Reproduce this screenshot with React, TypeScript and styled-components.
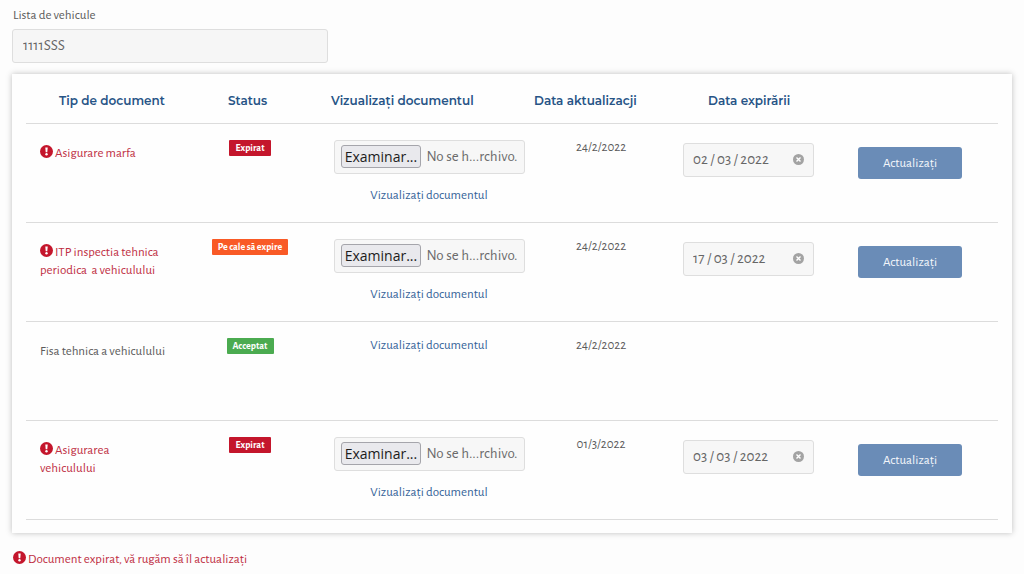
import React from "react";
import styled, { createGlobalStyle } from "styled-components";

const Global = createGlobalStyle`
  * { box-sizing: border-box; }
  body {
    margin: 0;
    background: #fdfdfd;
    color: #5b5b5b;
    font-family: "Alegreya Sans", Lato, "Liberation Sans", sans-serif;
    font-size: 13px;
    line-height: 18px;
  }
  button, input, select { font-family: inherit; }
`;

const Page = styled.main`
  padding: 7px 12px 0;
`;

const FieldLabel = styled.label`
  display: block;
  margin: 0 1px 4px;
`;

const VehicleSelect = styled.select`
  display: block;
  appearance: none;
  width: 100%;
  max-width: 316px;
  height: 34px;
  padding: 0 10px 2px;
  border: 1px solid #dedede;
  border-radius: 3px;
  background: #f6f6f6;
  color: #666;
  font-size: 15px;
`;

const Card = styled.section`
  margin-top: 11px;
  padding: 0 14px 13px;
  background: #fefefe;
  box-shadow: 0 0 6px rgba(0, 0, 0, 0.25);
`;

const Table = styled.table`
  width: 100%;
  table-layout: fixed;
  border-collapse: collapse;
`;

const Column = styled.col<{ $width: number }>`
  width: ${(p) => p.$width}px;
`;

const HeadCell = styled.th<{ $indent: number }>`
  height: 49px;
  padding: 6px 0 0 ${(p) => p.$indent}px;
  border-bottom: 1px solid #dcdcdc;
  color: #275486;
  font-family: Montserrat, Inter, sans-serif;
  font-size: 12px;
  font-weight: 600;
  text-align: left;
  white-space: nowrap;
`;

const Cell = styled.td<{ $center?: boolean; $top: number; $left?: number }>`
  height: 99px;
  padding: ${(p) => p.$top}px 0 0 ${(p) => p.$left ?? 0}px;
  border-bottom: 1px solid #dcdcdc;
  text-align: ${(p) => (p.$center ? "center" : "left")};
  vertical-align: top;
`;

const DocName = styled.span<{ $alert: boolean }>`
  color: ${(p) => (p.$alert ? "#bf2f44" : "#5b5b5b")};
  white-space: pre;
`;

const Badge = styled.span<{ $color: string }>`
  display: inline-block;
  height: 16px;
  padding: 0 6px;
  border-radius: 1px;
  background: ${(p) => p.$color};
  color: #fff;
  font-size: 10px;
  font-weight: 700;
  line-height: 17px;
  vertical-align: top;
`;

const FileBox = styled.label`
  position: relative;
  display: flex;
  align-items: center;
  gap: 5px;
  width: 191px;
  height: 34px;
  margin: 0 auto 13px;
  padding: 0 6px;
  border: 1px solid #dedede;
  border-radius: 3px;
  background: #f7f7f7;
  color: #6b6b6b;
  font-size: 15px;
  white-space: nowrap;
`;

const FileInput = styled.input`
  position: absolute;
  inset: 0;
  width: 100%;
  opacity: 0;
`;

const Browse = styled.span`
  width: 81px;
  height: 23px;
  border: 1px solid #a5a5ab;
  border-radius: 3px;
  background: #e9e9ed;
  color: #1c1c1c;
  font-family: "Open Sans", sans-serif;
  font-size: 14px;
  line-height: 22px;
  text-align: center;
`;

const DocLink = styled.a`
  color: #356399;
  text-decoration: none;
`;

const DateBox = styled.div`
  display: flex;
  align-items: center;
  width: 131px;
  height: 34px;
  padding: 0 9px;
  border: 1px solid #dedede;
  border-radius: 3px;
  background: #f7f7f7;
`;

const DateInput = styled.input`
  flex: 1;
  min-width: 0;
  padding: 0;
  border: 0;
  background: none;
  color: #666;
  font-size: 15px;
`;

const ClearButton = styled.button`
  display: flex;
  padding: 0;
  border: 0;
  background: none;
`;

const UpdateButton = styled.button`
  width: 104px;
  height: 32px;
  padding: 2px 0 0;
  border: 0;
  border-radius: 3px;
  background: #6a8cb7;
  color: #f4f7fb;
  font-size: 13px;
`;

const Notice = styled.p`
  margin: 18px 1px 0;
  color: #bf2f44;
`;

const AlertSvg = styled.svg`
  width: 13px;
  height: 13px;
  margin-right: 2px;
  vertical-align: -1px;
`;

const AlertIcon = () => (
  <AlertSvg viewBox="0 0 13 13" aria-hidden="true">
    <circle cx="6.5" cy="6.5" r="6.5" fill="#c4162c" />
    <path d="M5.3 2.6h2.4l-.4 4.6H5.7z" fill="#fff" />
    <circle cx="6.5" cy="9.2" r="1.2" fill="#fff" />
  </AlertSvg>
);

const ClearIcon = () => (
  <svg width="11" height="11" viewBox="0 0 11 11" aria-hidden="true">
    <circle cx="5.5" cy="5.5" r="5.5" fill="#a3a3a3" />
    <path d="M3.5 3.5l4 4M7.5 3.5l-4 4" stroke="#fff" strokeWidth="1.4" />
  </svg>
);

const STATUS = {
  expired: { text: "Expirat", color: "#c4162c" },
  expiring: { text: "Pe cale să expire", color: "#f95a26" },
  accepted: { text: "Acceptat", color: "#4bab50" },
};

const COLUMNS = [
  { width: 146, title: "Tip de document", indent: 33 },
  { width: 156, title: "Status", indent: 56 },
  { width: 202, title: "Vizualizați documentul", indent: 3 },
  { width: 142, title: "Data aktualizacji", indent: 4 },
  { width: 163, title: "Data expirării", indent: 36 },
  { width: 163, title: "", indent: 0 },
];

type Doc = {
  name: string;
  status: keyof typeof STATUS;
  updated: string;
  expires?: string;
};

const DOCS: Doc[] = [
  { name: "Asigurare marfa", status: "expired", updated: "24/2/2022", expires: "02 / 03 / 2022" },
  { name: "ITP inspectia tehnica\nperiodica  a vehiculului", status: "expiring", updated: "24/2/2022", expires: "17 / 03 / 2022" },
  { name: "Fisa tehnica a vehiculului", status: "accepted", updated: "24/2/2022" },
  { name: "Asigurarea\nvehiculului", status: "expired", updated: "01/3/2022", expires: "03 / 03 / 2022" },
];

function DocumentRow({ doc }: { doc: Doc }) {
  const status = STATUS[doc.status];
  const editable = doc.expires !== undefined;
  return (
    <tr>
      <Cell $top={21} $left={14}>
        <DocName $alert={editable}>
          {editable && <AlertIcon />}
          {doc.name}
        </DocName>
      </Cell>
      <Cell $top={16} $center>
        <Badge $color={status.color}>{status.text}</Badge>
      </Cell>
      <Cell $top={editable ? 16 : 15} $center>
        {editable && (
          <FileBox>
            <Browse>Examinar...</Browse>
            <span>No se h...rchivo.</span>
            <FileInput type="file" aria-label={doc.name} />
          </FileBox>
        )}
        <DocLink href="#">Vizualizați documentul</DocLink>
      </Cell>
      <Cell $top={15} $center>{doc.updated}</Cell>
      <Cell $top={19} $left={11}>
        {editable && (
          <DateBox>
            <DateInput type="text" defaultValue={doc.expires} aria-label="Data expirării" />
            <ClearButton type="button" aria-label="Clear"><ClearIcon /></ClearButton>
          </DateBox>
        )}
      </Cell>
      <Cell $top={23} $left={23}>
        {editable && <UpdateButton type="button">Actualizați</UpdateButton>}
      </Cell>
    </tr>
  );
}

export default function App() {
  return (
    <>
      <Global />
      <Page>
        <FieldLabel htmlFor="vehicle">Lista de vehicule</FieldLabel>
        <VehicleSelect id="vehicle">
          <option>1111SSS</option>
        </VehicleSelect>
        <Card>
          <Table>
            <colgroup>
              {COLUMNS.map((c, i) => <Column key={i} $width={c.width} />)}
            </colgroup>
            <thead>
              <tr>
                {COLUMNS.map((c, i) => <HeadCell key={i} $indent={c.indent}>{c.title}</HeadCell>)}
              </tr>
            </thead>
            <tbody>
              {DOCS.map((d) => <DocumentRow key={d.name} doc={d} />)}
            </tbody>
          </Table>
        </Card>
        <Notice><AlertIcon />Document expirat, vă rugăm să îl actualizați</Notice>
      </Page>
    </>
  );
}
